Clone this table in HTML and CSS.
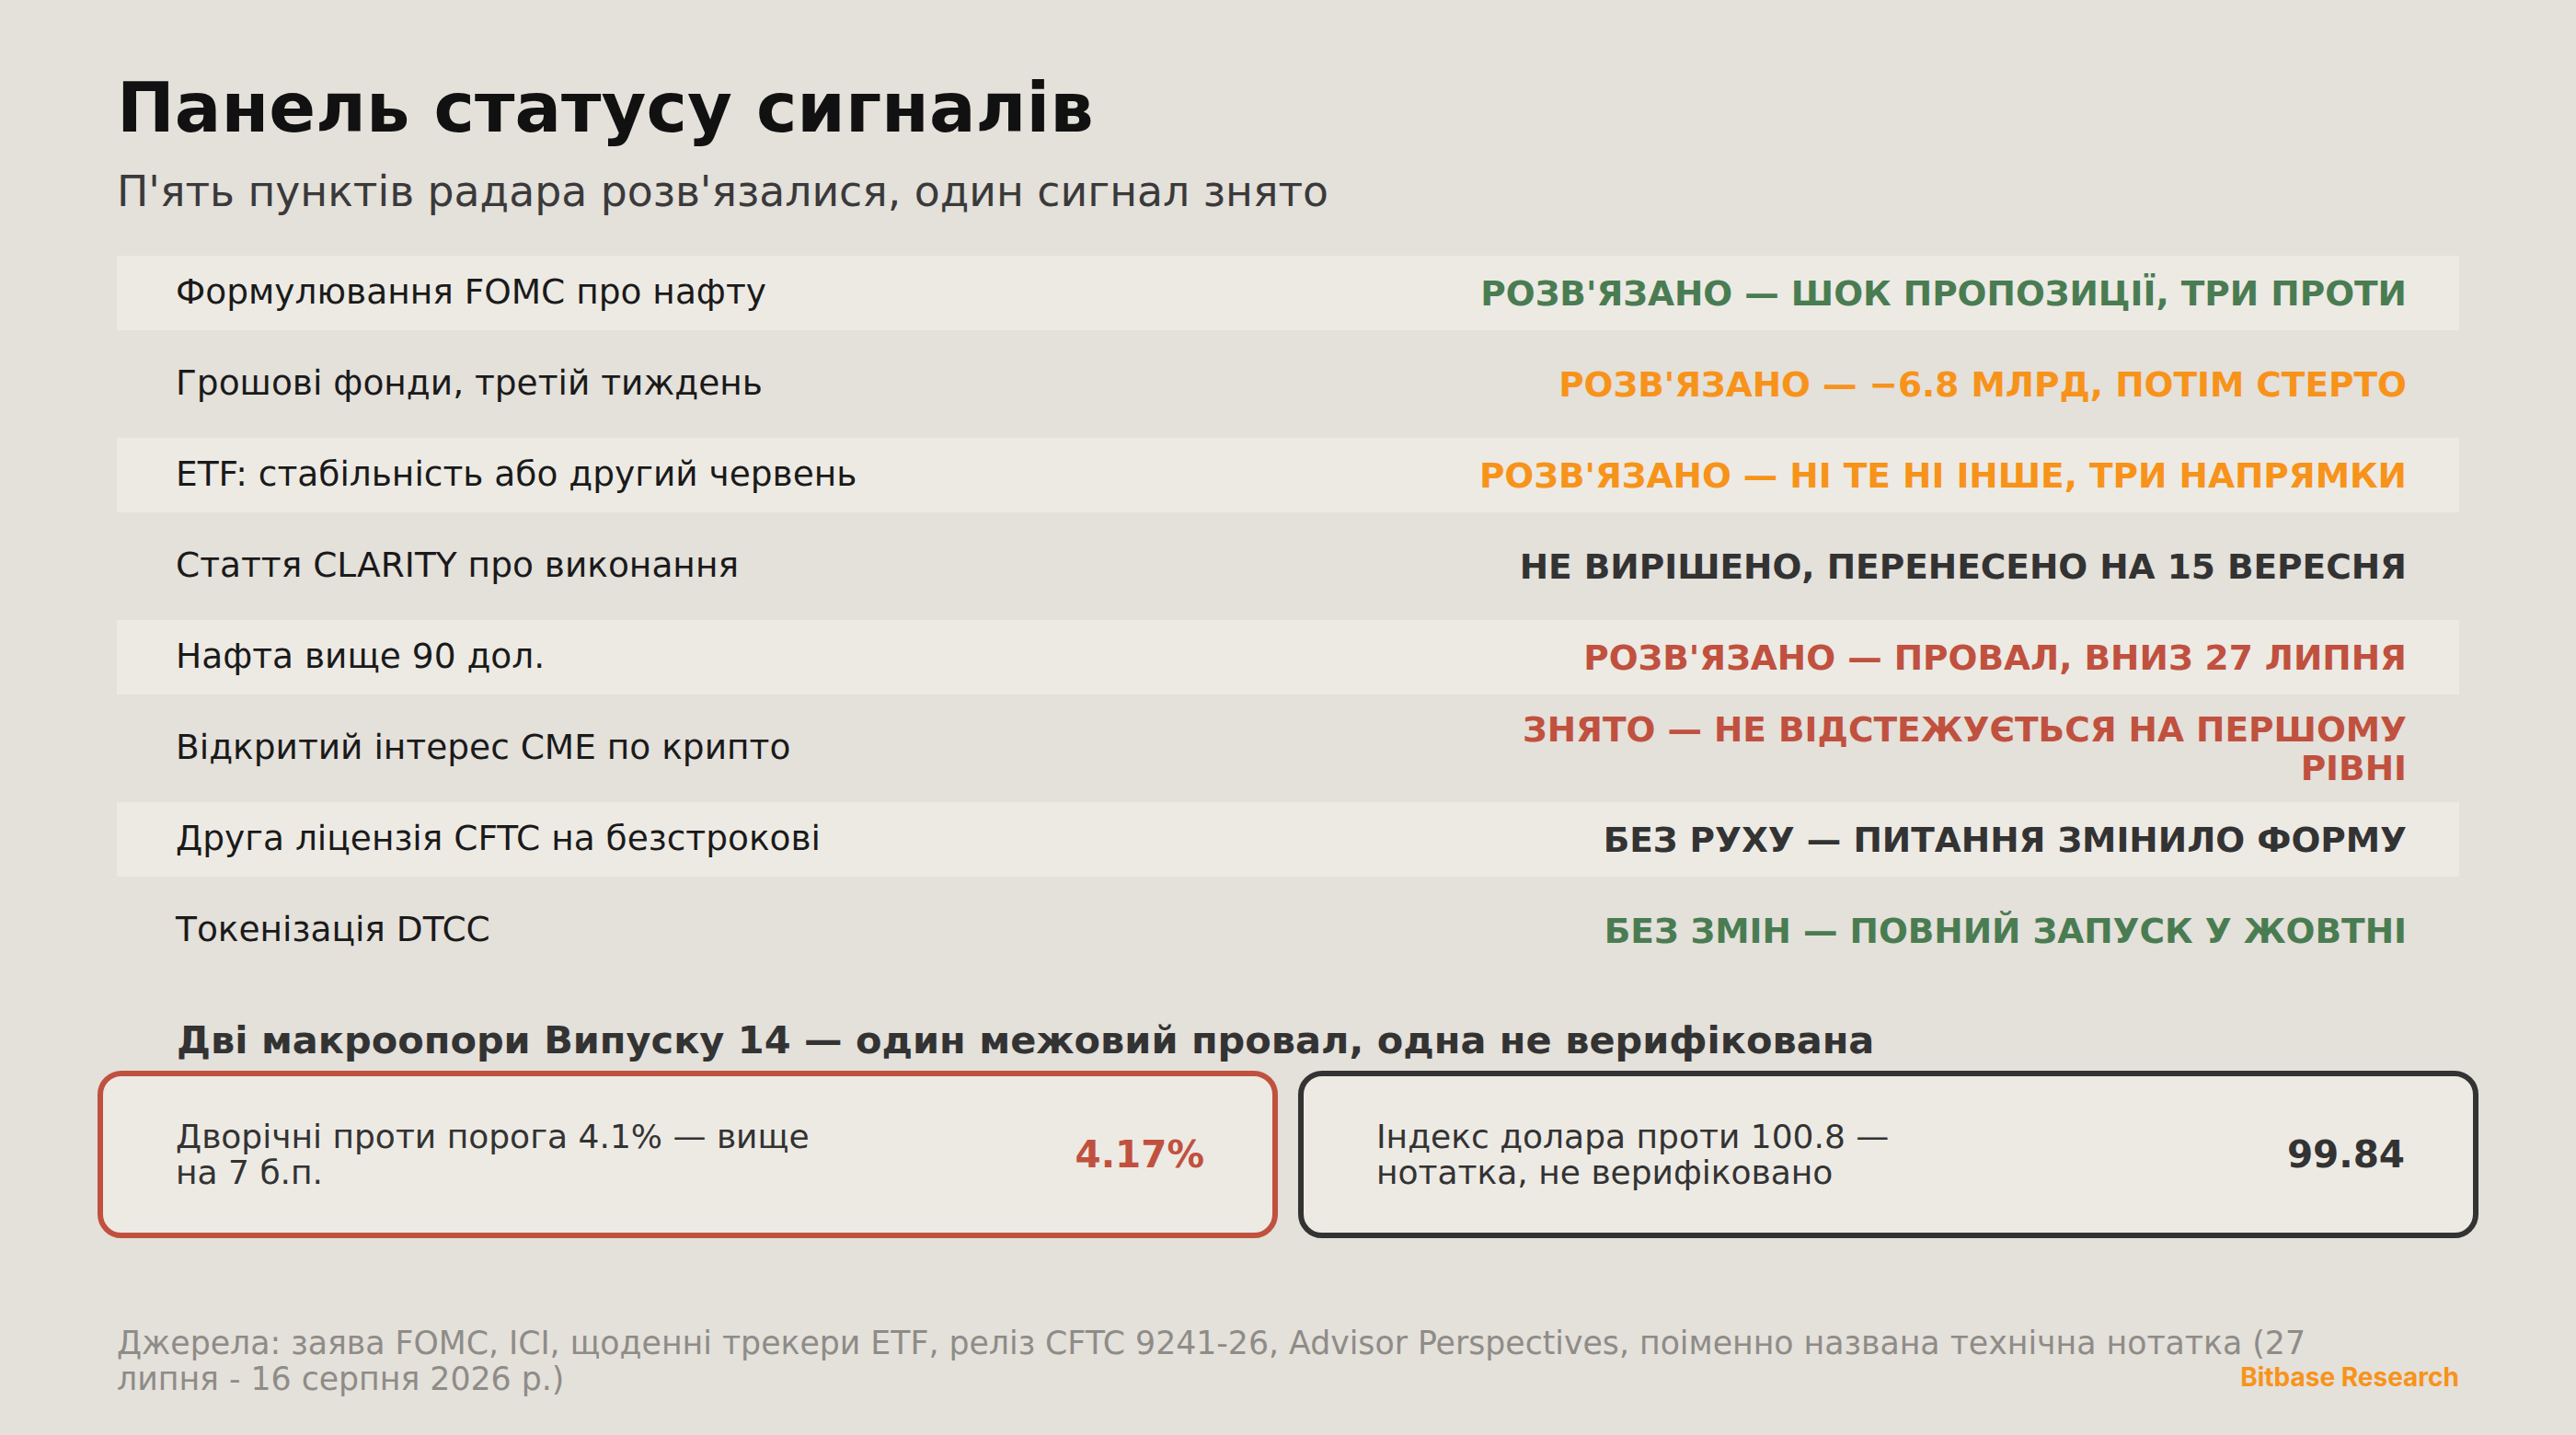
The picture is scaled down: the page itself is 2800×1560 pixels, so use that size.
FILE: index.html
```html
<!DOCTYPE html>
<html lang="uk">
<head>
<meta charset="utf-8">
<title>Панель статусу сигналів</title>
<link rel="stylesheet" href="styles.css">
</head>
<body>
<main class="page">
  <h1 class="title">Панель статусу сигналів</h1>
  <p class="subtitle">П'ять пунктів радара розв'язалися, один сигнал знято</p>

  <section class="table">
    <div class="row alt"><span class="label">Формулювання FOMC про нафту</span><span class="status green">РОЗВ'ЯЗАНО — ШОК ПРОПОЗИЦІЇ, ТРИ ПРОТИ</span></div>
    <div class="row"><span class="label">Грошові фонди, третій тиждень</span><span class="status orange">РОЗВ'ЯЗАНО — −6.8 МЛРД, ПОТІМ СТЕРТО</span></div>
    <div class="row alt"><span class="label">ETF: стабільність або другий червень</span><span class="status orange">РОЗВ'ЯЗАНО — НІ ТЕ НІ ІНШЕ, ТРИ НАПРЯМКИ</span></div>
    <div class="row"><span class="label">Стаття CLARITY про виконання</span><span class="status dark">НЕ ВИРІШЕНО, ПЕРЕНЕСЕНО НА 15 ВЕРЕСНЯ</span></div>
    <div class="row alt"><span class="label">Нафта вище 90 дол.</span><span class="status red">РОЗВ'ЯЗАНО — ПРОВАЛ, ВНИЗ 27 ЛИПНЯ</span></div>
    <div class="row"><span class="label">Відкритий інтерес CME по крипто</span><span class="status red">ЗНЯТО — НЕ ВІДСТЕЖУЄТЬСЯ НА ПЕРШОМУ РІВНІ</span></div>
    <div class="row alt"><span class="label">Друга ліцензія CFTC на безстрокові</span><span class="status dark">БЕЗ РУХУ — ПИТАННЯ ЗМІНИЛО ФОРМУ</span></div>
    <div class="row"><span class="label">Токенізація DTCC</span><span class="status green">БЕЗ ЗМІН — ПОВНИЙ ЗАПУСК У ЖОВТНІ</span></div>
  </section>

  <h2 class="heading">Дві макроопори Випуску 14 — один межовий провал, одна не верифікована</h2>

  <section class="cards">
    <div class="card card-red">
      <p class="card-text">Дворічні проти порога 4.1% — вище на 7 б.п.</p>
      <span class="card-value red">4.17%</span>
    </div>
    <div class="card card-dark">
      <p class="card-text">Індекс долара проти 100.8 — нотатка, не верифіковано</p>
      <span class="card-value dark">99.84</span>
    </div>
  </section>

  <footer class="footer">
    <p class="sources">Джерела: заява FOMC, ICI, щоденні трекери ETF, реліз CFTC 9241-26, Advisor Perspectives, поіменно названа технічна нотатка (27 липня - 16 серпня 2026 р.)</p>
    <span class="brand">Bitbase Research</span>
  </footer>
</main>
</body>
</html>
```
FILE: styles.css
```css
* { box-sizing: border-box; }
html, body { margin: 0; padding: 0; }
body {
  background: #e4e0da;
  font-family: "DejaVu Sans", "Noto Sans", sans-serif;
  width: 2800px;
  height: 1560px;
  overflow: hidden;
}
.page {
  padding: 72px 127px 0;
}
.title {
  margin: 0;
  font-size: 75px;
  line-height: 90px;
  font-weight: 700;
  color: #111111;
}
.subtitle {
  margin: 20px 0 0;
  font-size: 45.7px;
  line-height: 54px;
  color: #3a3a3a;
}
.table {
  margin-top: 42px;
  display: flex;
  flex-direction: column;
  gap: 18px;
}
.row {
  height: 81px;
  display: flex;
  align-items: center;
  justify-content: space-between;
  padding: 0 57px 0 64px;
}
.row.alt { background: #edeae4; }
.label {
  margin-bottom: 4px;
  font-size: 37.5px;
  color: #1a1a1a;
}
.status {
  font-size: 37.5px;
  font-weight: 700;
  line-height: 42px;
  text-align: right;
  max-width: 1045px;
}
.green { color: #4a7c52; }
.orange { color: #f7931a; }
.red { color: #c0513f; }
.dark { color: #333333; }
.heading {
  margin: 54px 0 0;
  padding-left: 65px;
  font-size: 41.5px;
  line-height: 50px;
  font-weight: 700;
  color: #333333;
}
.cards {
  margin: 8px -21px 0;
  display: grid;
  grid-template-columns: 1fr 1fr;
  gap: 22px;
}
.card {
  height: 182px;
  border: 6px solid #333333;
  border-radius: 26px;
  background: #edeae4;
  display: flex;
  align-items: center;
  justify-content: space-between;
  padding: 0 74px 0 79px;
}
.card-red { border-color: #c0513f; }
.card-text {
  margin: 0;
  max-width: 712px;
  font-size: 36px;
  line-height: 39px;
  color: #333333;
}
.card-value {
  font-size: 40.5px;
  font-weight: 700;
}
.footer {
  margin-top: 95px;
  display: grid;
  grid-template-columns: 1fr auto;
  align-items: end;
}
.sources {
  grid-column: 1 / -1;
  grid-row: 1;
  margin: 0;
  max-width: 2420px;
  font-size: 34.7px;
  line-height: 39px;
  color: #8e8c88;
}
.brand {
  grid-column: 2;
  grid-row: 1;
  margin-bottom: 5px;
  font-family: "Inter", "Noto Sans", sans-serif;
  font-weight: 700;
  font-size: 28px;
  line-height: 34px;
  color: #f7931a;
}
```
